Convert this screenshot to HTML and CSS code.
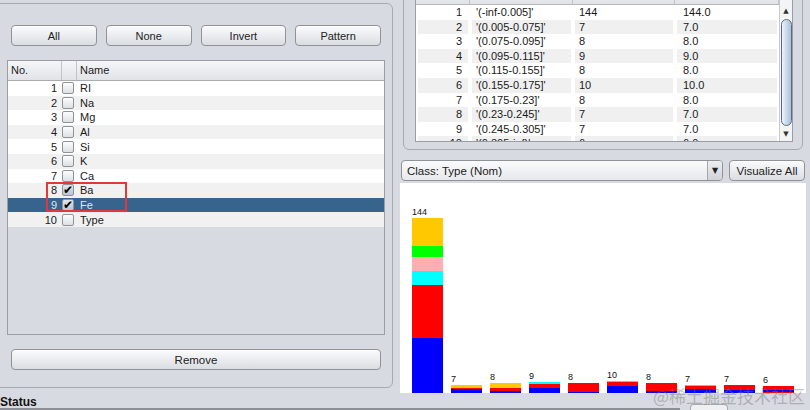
FILE: index.html
```html
<!DOCTYPE html>
<html>
<head>
<meta charset="utf-8">
<link rel="stylesheet" href="styles.css">
</head>
<body>
<div class="app">
  <div class="main">
    <div class="left">
      <div class="panel">
        <div class="btnrow">
          <button class="btn">All</button>
          <button class="btn">None</button>
          <button class="btn">Invert</button>
          <button class="btn">Pattern</button>
        </div>
        <div class="attr">
          <div class="thead">
            <div class="h-no">No.</div>
            <div class="h-cb"></div>
            <div class="h-name">Name</div>
          </div>
          <div class="row"><span class="no">1</span><span class="cb"></span><span class="nm">RI</span></div>
          <div class="row alt"><span class="no">2</span><span class="cb"></span><span class="nm">Na</span></div>
          <div class="row"><span class="no">3</span><span class="cb"></span><span class="nm">Mg</span></div>
          <div class="row alt"><span class="no">4</span><span class="cb"></span><span class="nm">Al</span></div>
          <div class="row"><span class="no">5</span><span class="cb"></span><span class="nm">Si</span></div>
          <div class="row alt"><span class="no">6</span><span class="cb"></span><span class="nm">K</span></div>
          <div class="row"><span class="no">7</span><span class="cb"></span><span class="nm">Ca</span></div>
          <div class="row alt"><span class="no">8</span><span class="cb checked">✔</span><span class="nm">Ba</span></div>
          <div class="row sel"><span class="no">9</span><span class="cb checked">✔</span><span class="nm">Fe</span></div>
          <div class="row alt"><span class="no">10</span><span class="cb"></span><span class="nm">Type</span></div>
        </div>
        <button class="btn wide">Remove</button>
      </div>
    </div>
    <div class="right">
      <div class="statsframe">
        <div class="stats">
          <div class="sgrid">
            <div class="shead"><div></div><div></div><div></div><div></div></div>
            <div class="srow"><div class="n">1</div><div>'(-inf-0.005]'</div><div>144</div><div>144.0</div></div>
            <div class="srow alt"><div class="n">2</div><div>'(0.005-0.075]'</div><div>7</div><div>7.0</div></div>
            <div class="srow"><div class="n">3</div><div>'(0.075-0.095]'</div><div>8</div><div>8.0</div></div>
            <div class="srow alt"><div class="n">4</div><div>'(0.095-0.115]'</div><div>9</div><div>9.0</div></div>
            <div class="srow"><div class="n">5</div><div>'(0.115-0.155]'</div><div>8</div><div>8.0</div></div>
            <div class="srow alt"><div class="n">6</div><div>'(0.155-0.175]'</div><div>10</div><div>10.0</div></div>
            <div class="srow"><div class="n">7</div><div>'(0.175-0.23]'</div><div>8</div><div>8.0</div></div>
            <div class="srow alt"><div class="n">8</div><div>'(0.23-0.245]'</div><div>7</div><div>7.0</div></div>
            <div class="srow"><div class="n">9</div><div>'(0.245-0.305]'</div><div>7</div><div>7.0</div></div>
            <div class="srow alt"><div class="n">10</div><div>'(0.305-inf)'</div><div>6</div><div>6.0</div></div>
          </div>
          <div class="vscroll">
            <div class="arrow">▲</div>
            <div class="thumb"></div>
            <div class="arrow">▼</div>
          </div>
        </div>
      </div>
      <div class="classrow">
        <div class="combo"><span class="combo-text">Class: Type (Nom)</span><span class="combo-btn">▼</span></div>
        <button class="btn vis">Visualize All</button>
      </div>
      <div class="chart">
        <div class="barcol"><span class="lbl">144</span><div class="bar">
          <i class="blue" style="height:55px"></i><i class="red" style="height:53px"></i><i class="cyan" style="height:14px"></i><i class="pink" style="height:14px"></i><i class="green" style="height:11px"></i><i class="yellow" style="height:28px"></i>
        </div></div>
        <div class="barcol"><span class="lbl">7</span><div class="bar">
          <i class="blue" style="height:4px"></i><i class="red" style="height:1px"></i><i class="yellow" style="height:3.5px"></i>
        </div></div>
        <div class="barcol"><span class="lbl">8</span><div class="bar">
          <i class="blue" style="height:2px"></i><i class="red" style="height:3.5px"></i><i class="yellow" style="height:4.2px"></i>
        </div></div>
        <div class="barcol"><span class="lbl">9</span><div class="bar">
          <i class="blue" style="height:5.5px"></i><i class="red" style="height:4px"></i><i class="cyan" style="height:1.5px"></i>
        </div></div>
        <div class="barcol"><span class="lbl">8</span><div class="bar">
          <i class="blue" style="height:1px"></i><i class="red" style="height:8.7px"></i>
        </div></div>
        <div class="barcol"><span class="lbl">10</span><div class="bar">
          <i class="blue" style="height:7px"></i><i class="red" style="height:4px"></i><i class="cyan" style="height:1px"></i>
        </div></div>
        <div class="barcol"><span class="lbl">8</span><div class="bar">
          <i class="blue" style="height:2px"></i><i class="red" style="height:7.7px"></i>
        </div></div>
        <div class="barcol"><span class="lbl">7</span><div class="bar">
          <i class="blue" style="height:4px"></i><i class="red" style="height:3.5px"></i><i class="cyan" style="height:1px"></i>
        </div></div>
        <div class="barcol"><span class="lbl">7</span><div class="bar">
          <i class="blue" style="height:3px"></i><i class="red" style="height:5.5px"></i>
        </div></div>
        <div class="barcol"><span class="lbl">6</span><div class="bar">
          <i class="red" style="height:1.5px"></i><i class="blue" style="height:1.5px"></i><i class="red" style="height:4.3px"></i>
        </div></div>
      </div>
    </div>
  </div>
  <div class="statusbar">
    <div class="status-left">Status</div>
    <div class="status-tab"></div>
  </div>
</div>
<div class="redbox"></div>
<div class="watermark">@稀土掘金技术社区</div>
</body>
</html>
```

FILE: styles.css
```css
html, body {
  margin: 0;
  padding: 0;
}
body {
  width: 810px;
  height: 410px;
  overflow: hidden;
  background: #d7dae0;
  font-family: "Liberation Sans", Arial, sans-serif;
  font-size: 11px;
  color: #1a1a1a;
  position: relative;
}
.app {
  display: flex;
  flex-direction: column;
  height: 410px;
}
.main {
  display: flex;
  height: 393px;
}
.left {
  width: 395px;
  flex: none;
}
.panel {
  margin-top: 3px;
  margin-left: -6px;
  width: 399px;
  height: 385px;
  box-sizing: border-box;
  border: 1px solid #a7abb1;
  border-radius: 6px;
  padding: 21px 7px 0 12px;
  display: flex;
  flex-direction: column;
}
.btn {
  font-family: "Liberation Sans", Arial, sans-serif;
  font-size: 11px;
  color: #222;
  height: 21px;
  border: 1px solid #8f9399;
  border-radius: 4px;
  background: linear-gradient(#fbfbfc, #e9ebee 55%, #dadde1);
  box-shadow: inset 0 1px 0 #ffffff;
  padding: 0;
  margin: 0;
}
.btnrow {
  display: grid;
  grid-template-columns: repeat(4, 1fr);
  column-gap: 9px;
  margin: 0 4px;
  height: 21px;
}
.attr {
  margin-top: 14px;
  height: 275px;
  box-sizing: border-box;
  border: 1px solid #9a9ea4;
  background: #d7dae0;
  flex: none;
}
.thead {
  display: flex;
  height: 20px;
  box-sizing: border-box;
  border-bottom: 1px solid #a9adb2;
  background: linear-gradient(#f5f6f8, #e1e3e7);
  line-height: 19px;
}
.h-no {
  width: 54px;
  padding-left: 3px;
  box-sizing: border-box;
  border-right: 1px solid #c0c3c8;
}
.h-cb {
  width: 14px;
  border-right: 1px solid #c0c3c8;
}
.h-name {
  padding-left: 3px;
}
.row {
  display: flex;
  align-items: center;
  height: 14.6px;
  background: #ffffff;
}
.row.alt {
  background: #f1f1f2;
}
.row.sel {
  background: #36648c;
  color: #dfe8f1;
}
.no {
  width: 49px;
  text-align: right;
  line-height: 14px;
}
.cb {
  width: 12px;
  height: 12px;
  box-sizing: border-box;
  margin-left: 5px;
  border: 1px solid #8f9398;
  border-radius: 2px;
  background: linear-gradient(#fdfdfd, #dde0e4);
  font-size: 12px;
  line-height: 10px;
  text-align: center;
  color: #000;
  font-family: "DejaVu Sans", sans-serif;
}
.cb.checked {
  background: linear-gradient(#dfe5ec, #b9c5d2);
  font-weight: bold;
}
.nm {
  margin-left: 6px;
  line-height: 14px;
}
.btn.wide {
  margin: 14px 4px 0;
  flex: none;
  font-size: 11.5px;
}
.right {
  width: 415px;
  flex: none;
  display: flex;
  flex-direction: column;
}
.statsframe {
  margin-top: -30px;
  margin-left: 8px;
  width: 400px;
  height: 180px;
  box-sizing: border-box;
  border: 1px solid #a7abb1;
  border-radius: 6px;
  padding: 9px 9px 7px 11px;
  flex: none;
}
.stats {
  height: 100%;
  box-sizing: border-box;
  border: 1px solid #9a9ea4;
  display: flex;
  background: #fff;
}
.sgrid {
  flex: 1;
  overflow: hidden;
}
.shead {
  display: grid;
  grid-template-columns: 54px 103px 102px 104px;
  height: 24px;
  box-sizing: border-box;
  border-bottom: 1px solid #b4b7bc;
  background: linear-gradient(#f5f6f8, #e1e3e7);
}
.shead div {
  border-right: 1px solid #c0c3c8;
}
.srow {
  display: grid;
  grid-template-columns: 54px 103px 102px 104px;
  height: 14.6px;
  line-height: 14.6px;
}
.srow div {
  margin: 0 2px;
  padding-left: 4px;
  white-space: nowrap;
}
.srow div.n {
  text-align: right;
  padding-left: 0;
  padding-right: 6px;
}
.srow.alt div {
  background: #f0f0f1;
}
.srow div:nth-child(4) {
  padding-left: 6px;
}
.vscroll {
  width: 13px;
  flex: none;
  border-left: 1px solid #c6c9ce;
  background: #f3f4f6;
  display: flex;
  flex-direction: column;
  align-items: center;
  padding-top: 24px;
  box-sizing: border-box;
}
.arrow {
  font-family: "DejaVu Sans", sans-serif;
  font-size: 7px;
  line-height: 12px;
  height: 12px;
  color: #333;
}
.thumb {
  width: 11px;
  height: 107px;
  margin: 2px 0;
  box-sizing: border-box;
  border: 1px solid #5d6b78;
  border-radius: 7px;
  background: linear-gradient(90deg, #eef4fa, #c2d5e8 60%, #a9c1da);
}
.classrow {
  display: flex;
  margin: 10px 0 0 6px;
  height: 21px;
  gap: 6px;
}
.combo {
  width: 322px;
  height: 21px;
  box-sizing: border-box;
  border: 1px solid #8f9399;
  border-radius: 4px;
  background: linear-gradient(#fbfbfc, #e6e8eb);
  display: flex;
  align-items: center;
  font-size: 11.5px;
}
.combo-text {
  flex: 1;
  padding-left: 5px;
}
.combo-btn {
  width: 15px;
  height: 19px;
  box-sizing: border-box;
  border-left: 1px solid #a3a7ad;
  background: linear-gradient(#eceef1, #cfd3d8);
  font-family: "DejaVu Sans", sans-serif;
  font-size: 8px;
  line-height: 19px;
  text-align: center;
  color: #222;
  border-radius: 0 3px 3px 0;
}
.btn.vis {
  width: 76px;
  font-size: 11.5px;
}
.chart {
  margin: 2px 0 0 5px;
  width: 406px;
  height: 210px;
  background: #fff;
  display: flex;
  align-items: flex-end;
  padding-left: 12px;
  gap: 8px;
  box-sizing: border-box;
}
.barcol {
  width: 31px;
  display: flex;
  flex-direction: column;
}
.lbl {
  font-size: 9px;
  line-height: 9px;
  height: 9px;
  margin-bottom: 1px;
  color: #111;
}
.bar {
  display: flex;
  flex-direction: column-reverse;
}
.bar i {
  display: block;
}
.blue { background: #0000ff; }
.red { background: #ff0000; }
.cyan { background: #00ffff; }
.pink { background: #ffafaf; }
.green { background: #00ff00; }
.yellow { background: #ffc800; }
.statusbar {
  height: 17px;
  display: flex;
  align-items: flex-end;
}
.status-left {
  width: 680px;
  height: 17px;
  box-sizing: border-box;
  border-bottom: 2px solid #8c9096;
  font-weight: bold;
  font-size: 12px;
  line-height: 18px;
  color: #111;
}
.status-tab {
  margin-left: 10px;
  width: 38px;
  height: 6px;
  box-sizing: border-box;
  border: 1px solid #a7abb1;
  border-bottom: none;
  border-radius: 4px 4px 0 0;
  background: #eef0f2;
}
.redbox {
  position: absolute;
  left: 46px;
  top: 182px;
  width: 81px;
  height: 30px;
  box-sizing: border-box;
  border: 2px solid #e5363a;
}
.watermark {
  position: absolute;
  left: 653px;
  top: 386px;
  font-family: "Noto Sans CJK SC", sans-serif;
  font-size: 17px;
  line-height: 20px;
  color: rgba(120, 120, 125, 0.45);
  white-space: nowrap;
}
```
